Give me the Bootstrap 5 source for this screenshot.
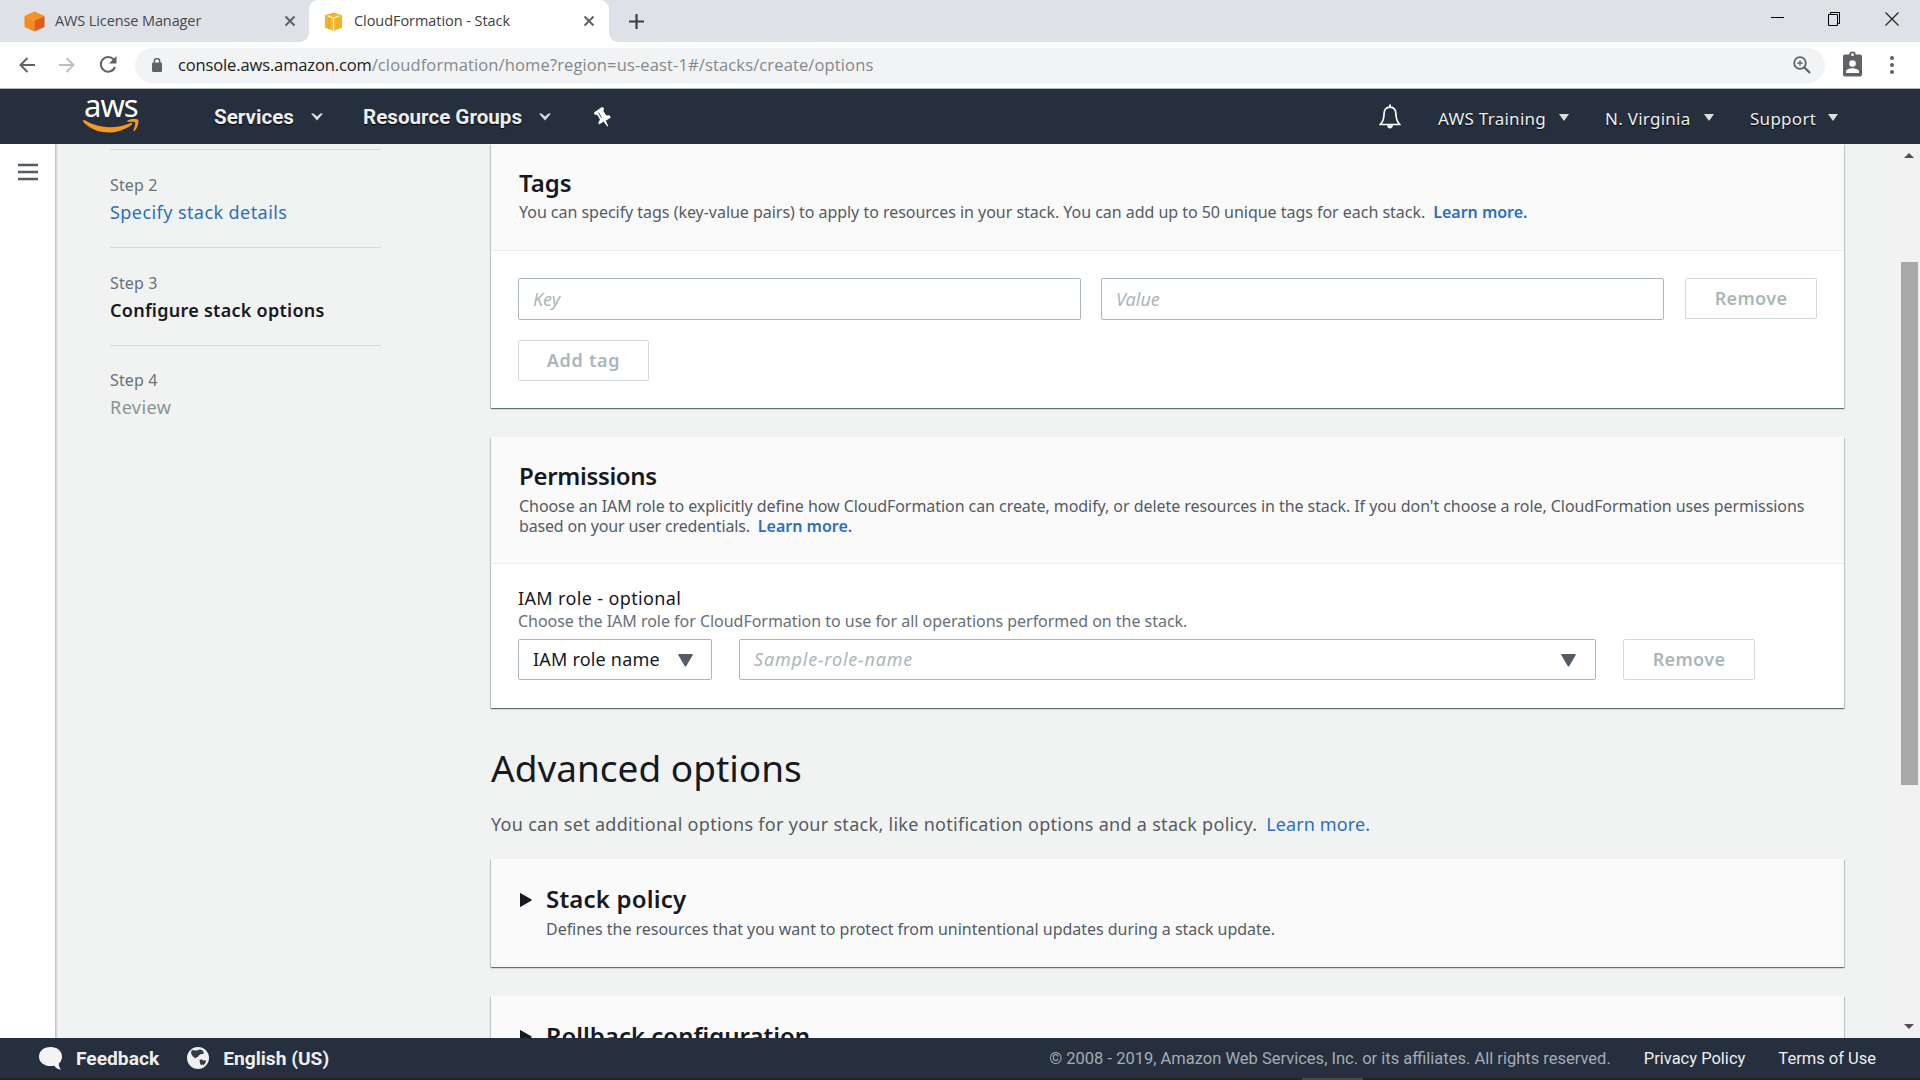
<!DOCTYPE html>
<html lang="en">
<head>
<meta charset="utf-8">
<meta name="viewport" content="width=device-width, initial-scale=1">
<title>CloudFormation - Stack</title>
<link href="https://cdn.jsdelivr.net/npm/bootstrap@5.3.0/dist/css/bootstrap.min.css" rel="stylesheet">
<style>
body{font-family:"Noto Sans","Open Sans",sans-serif;height:1080px;overflow:hidden;background:#f1f3f3;color:#16191f}
svg{display:block;flex:none}
a{text-decoration:none;color:#2b6fbc}
/* browser chrome */
.tabstrip{height:42px;background:#dee1e5;font:14.5px/20px "Open Sans",sans-serif;letter-spacing:-.11px;color:#45494d}
.tab-idle{width:309px;padding:0 13px 0 24px}
.tab-live{width:300px;height:42px;background:#fff;border-radius:9px 9px 0 0;padding:0 14px 0 15px;color:#3c4043;position:relative;letter-spacing:-.06px}
.tab-name{margin-left:10px}
.tab-live .tab-name{margin-left:11px}
.tab-live::before,.tab-live::after{content:"";position:absolute;bottom:0;width:9px;height:9px}
.tab-live::before{left:-9px;background:radial-gradient(circle at 0 0,transparent 8.5px,#fff 9px)}
.tab-live::after{right:-9px;background:radial-gradient(circle at 100% 0,transparent 8.5px,#fff 9px)}
.tab-plus{margin-left:20px}
.win-ctl{gap:43px;padding-right:21px;padding-bottom:4px}
.toolbar{height:47px;background:#fff;border-bottom:1px solid #b3b5b8;padding:0 19px}
.omnibox{height:35px;border-radius:18px;background:#f1f3f4;margin-left:18px;width:1690px;padding:0 14px 0 17px;font:16.5px/22px "Open Sans",sans-serif;color:#84888c}
.omnibox .host{color:#202124;letter-spacing:-.13px}
.omnibox .path{letter-spacing:.13px}
/* console header */
.topnav{height:55px;background:#262f3e;padding:0 82px 0 83px;color:#eee}
.logo-box{width:56px;height:55px;padding-top:3px}
.logo-word{font:400 31px/27px "Noto Sans",sans-serif;letter-spacing:-1px;color:#fff;margin-left:1px}
.menu-main{font:700 20.6px/26px Roboto,sans-serif;padding-top:1px;text-shadow:0 1px 1px #000}
.menu-side{font:17px/24px "Noto Sans",sans-serif;letter-spacing:.27px;padding-top:5px;text-shadow:0 1px 1px #000}
.menu-side svg{margin-top:-4px}
.w-services{width:109px;margin-left:75px}.w-groups{width:188px;margin-left:40px}
.w-train{width:131px}.w-region{width:109px}.w-support{width:88px}
/* page area */
.stage{height:894px;overflow:hidden}
.rail{width:56px;background:#fff;border-right:1px solid #bfc4c4;box-shadow:1px 0 1px rgba(0,28,36,.12);padding:19px 0 0 18px}
.steps{width:434px;padding:5px 109px 0 54px;color:#687078}
.step-item{border-top:1px solid #d5dbdb;height:98px;padding-top:24px;white-space:nowrap}
.step-item:last-child{padding-top:23px}
.step-no{font-size:16px;line-height:22px;letter-spacing:.15px}
.step-name{font-size:18px;line-height:24px;letter-spacing:.43px;margin-top:4px}
.step-now{font-weight:600;color:#16191f;letter-spacing:.27px}
.main-col{width:1353px;margin-left:1px}
.panel{background:#fff;box-shadow:0 1px 1px 0 rgba(0,28,36,.45),1px 1px 1px 0 rgba(0,28,36,.15),-1px 1px 1px 0 rgba(0,28,36,.15)}
.panel+.panel{margin-top:29px}
.panel-head{background:#fafafa;border-bottom:1px solid #eaeded;padding:24px 27px 0 28px}
.panel-head h2{font-size:24px;line-height:30px;font-weight:600;margin:0 0 4px}
.panel-head h2.tight{letter-spacing:-.33px;margin-bottom:5px}
.hint{font-size:16px;line-height:20px;color:#545b64;letter-spacing:-.03px;margin:0;white-space:nowrap}
.hint a{font-weight:600;margin-left:4px}
.hint-long{letter-spacing:-.06px}
.hint-second{letter-spacing:-.16px}
.hint-second a{letter-spacing:0}
.h-tags{height:107px}.h-perm{height:127px}
.panel-in{padding:27px 27px}
.field{border:1px solid #aab7b8;border-radius:2px;height:42px;font-size:18px;line-height:24px;color:#aab7b8;font-style:italic;padding:0 15px 0 14px;background:#fff}
.field::placeholder{color:#aab7b8;opacity:1}
.field-key{width:563px}
.field-key:first-child{margin-right:20px}
.btn-off{height:41px;border:1px solid #d5dbdb;border-radius:2px;background:#fff;color:#aab7b8;font-weight:600;font-size:18px;line-height:24px;letter-spacing:.35px;padding:0 0 2px}
.btn-remove{width:132px}.btn-add{width:131px;letter-spacing:.7px;margin-top:20px}
.role-type{width:194px;height:41px;color:#16191f;font-style:normal;padding-bottom:1px;letter-spacing:.2px}
.role-name{width:857px;height:41px;padding-bottom:1px;letter-spacing:.8px}
.role-type svg,.role-name svg{margin-top:2px}
.label-main{font-size:18px;line-height:24px;letter-spacing:.36px}
.adv-title{font-size:37px;line-height:46px;font-weight:400;margin:37px 0 21px}
.adv-text{font-size:18px;line-height:24px;letter-spacing:.29px;color:#545b64;margin:0 0 23px;white-space:nowrap}
.fold{height:108px;background:#fafafa;padding:25px 29px 0}
.fold h2{font-size:24px;line-height:30px;font-weight:600;margin:0 0 5px}
.fold svg{margin:9px 14px 0 0}
.scroller{width:20px;background:#f1f1f1;padding:9px 0}
.thumb{width:17px;height:523px;background:#a8a8a8;margin-top:104px;margin-left:1px}
/* footer */
.foot{height:40px;background:#262f3e;color:#eee;padding:0 44px 0 39px;font-family:Roboto,sans-serif;font-size:16.5px;line-height:24px}
.foot span{padding-top:1px}
.foot-strong{font-weight:700;font-size:19.2px}
.taskbar{height:2px;background:#222;padding-left:1302px}
.taskbar div{width:61px;height:2px;background:#4b4b4b}
</style>
<script src="https://cdn.jsdelivr.net/npm/bootstrap@5.3.0/dist/js/bootstrap.bundle.min.js"></script>
</head>
<body>
<div class="tabstrip d-flex justify-content-between">
  <div class="d-flex align-items-center">
    <div class="tab-idle d-flex align-items-center">
      <svg width="21" height="21" viewBox="0 0 21 21"><path fill="#f7931e" d="M10.500 .5 20.500 5 10.500 9.500.500 5z"/><path fill="#f28a1f" d="M.5 5 10.500 9.500V20.500L.5 16z"/><path fill="#e25b17" d="M20.500 5 10.500 9.500V20.500l10-4.500z"/></svg>
      <span class="tab-name me-auto">AWS License Manager</span>
      <svg width="12" height="12" viewBox="0 0 12 12"><path d="M1.500 1.500l9 9m0-9l-9 9" stroke="#5f6368" stroke-width="2"/></svg>
    </div>
    <div class="tab-live d-flex align-items-center">
      <svg width="19" height="19" viewBox="0 0 19 21"><path fill="#f2b42a" d="M0 3.500 9.500.5 19 3.500v14l-9.500 3.200-9.500-3.200z"/><path fill="#f5b324" d="M1 3.500 9.500 6 18 3.500 9.500 1z"/><path d="M3 4.200l6.500 2.500L16 4.200M9.500 6.500v13.500" fill="none" stroke="#fff3d0" stroke-width="1.500"/><path d="M4.500 6v13M14.500 6v13" stroke="#e5a41f"/></svg>
      <span class="tab-name me-auto">CloudFormation - Stack</span>
      <svg width="12" height="12" viewBox="0 0 12 12"><path d="M1.500 1.500l9 9m0-9l-9 9" stroke="#5f6368" stroke-width="2"/></svg>
    </div>
    <svg class="tab-plus" width="15" height="15" viewBox="0 0 15 15"><path d="M7.500 0v15M0 7.500h15" stroke="#3c4043" stroke-width="2.200"/></svg>
  </div>
  <div class="win-ctl d-flex align-items-center">
    <svg width="14" height="14" viewBox="0 0 14 14"><path d="M0 5.500h13" stroke="#000"/></svg>
    <svg width="14" height="14" viewBox="0 0 14 14"><path d="M.5 2.500h9v11h-9zM2.500 2.500v-2h9v11h-2" fill="none" stroke="#000"/></svg>
    <svg width="14" height="14" viewBox="0 0 14 14"><path d="M.5.500l13 13m0-13l-13 13" stroke="#222" stroke-width="1.200"/></svg>
  </div>
</div>

<div class="toolbar d-flex align-items-center">
  <svg width="16" height="16" viewBox="0 0 16 16"><path d="M16 8H1.500M8.500 1L1.500 8l7 7" fill="none" stroke="#5f6368" stroke-width="2"/></svg>
  <svg class="ms-4" width="16" height="16" viewBox="0 0 16 16"><path d="M0 8h14.500M7.500 1l7 7-7 7" fill="none" stroke="#bcbec1" stroke-width="2"/></svg>
  <svg class="ms-4" width="18" height="18" viewBox="0 0 18 18"><path d="M14.800 3.700A7.300 7.300 0 1 0 16 11" fill="none" stroke="#5f6368" stroke-width="2.100"/><path d="M17.500 0v7.500H10z" fill="#5f6368"/></svg>
  <div class="omnibox d-flex align-items-center">
    <svg width="10" height="14" viewBox="0 0 10 14"><rect y="4.500" width="10" height="9.500" rx="1.200" fill="#5f6368"/><path d="M2.300 5V3.300a2.700 2.700 0 0 1 5.400 0V5" fill="none" stroke="#5f6368" stroke-width="1.500"/></svg>
    <span class="ms-3 me-auto"><span class="host">console.aws.amazon.com</span><span class="path">/cloudformation/home?region=us-east-1#/stacks/create/options</span></span>
    <svg width="18" height="18" viewBox="0 0 18 18" fill="none" stroke="#5f6368"><circle cx="7" cy="7" r="5.800" stroke-width="1.800"/><path d="M11.200 11.200l5.800 5.800" stroke-width="2.300"/><path d="M7 4.300v5.400M4.300 7h5.400" stroke-width="1.300"/></svg>
  </div>
  <svg style="margin-left:18px;margin-top:-3px" width="19" height="26" viewBox="0 0 19 26"><rect y="3.500" width="19" height="22" rx="2" fill="#5f6368"/><circle cx="9.500" cy="3.700" r="3.200" fill="#5f6368"/><circle cx="9.500" cy="3.700" r="1.400" fill="#fff"/><circle cx="9.500" cy="12.500" r="3.300" fill="#fff"/><path d="M3 22v-1.500c0-2.200 4.300-3.300 6.500-3.300s6.500 1.100 6.500 3.300V22z" fill="#fff"/></svg>
  <svg style="margin-left:28px" width="4" height="18" viewBox="0 0 4 18" fill="#5f6368"><circle cx="2" cy="2" r="2"/><circle cx="2" cy="9" r="2"/><circle cx="2" cy="16" r="2"/></svg>
</div>

<nav class="topnav d-flex align-items-center">
  <div class="logo-box">
    <div class="logo-word">aws</div>
    <svg width="56" height="15" viewBox="0 0 56 15"><path d="M.3 1.600C.8.900 1.300 1 2.200 1.500c8 4.600 16 6.700 24.500 6.700 7 0 14.500-1.500 21-4.300 1.300-.5 2.200.8 1 1.800C42.500 10.500 34 13.500 26 13.500 15.500 13.500 6.500 9.500.6 3.200 0 2.500 0 2 .3 1.600z" fill="#f7981f"/><path d="M44.500 1.600C47.500-.4 52.500-.5 55 .6c1.400 1.500-.3 8.400-3.600 11.300-.6.500-1.300.1-1-.6 1-2.500 2.300-6.600 1.700-7.900-.8-1-4.500-.6-6.900-.5-.9 0-1.200-.8-.7-1.300z" fill="#f7981f"/></svg>
  </div>
  <div class="menu-main d-flex align-items-center">
    <div class="w-services d-flex align-items-center justify-content-between">Services
      <svg width="12" height="8" viewBox="0 0 12 8"><path d="M0 .5h2.500L6 3.500 9.500.5H12L6 7.500z" fill="#ddd"/></svg></div>
    <div class="w-groups d-flex align-items-center justify-content-between">Resource Groups
      <svg width="12" height="8" viewBox="0 0 12 8"><path d="M0 .5h2.500L6 3.500 9.500.5H12L6 7.500z" fill="#ddd"/></svg></div>
    <svg style="margin-left:43px" width="17" height="20" viewBox="0 0 17 20"><path d="M8 0l2 1-.6 3.200 3 4.300 3.200-.2 1.200 2.200-5 3.200L14.300 19l-1 .4-3.700-5-4.400 3-1-1.900 1.800-2.700-2.600-4.800L.5 7.500 0 5.500z" fill="#fff"/><path d="M4.600 5.600l3 5.200" stroke="#262f3e" stroke-width=".9"/></svg>
  </div>
  <svg class="ms-auto" style="margin-right:37px" width="22" height="25" viewBox="0 0 22 25"><path d="M11 3.200c-4.300 0-6 3.300-6 7 0 5.500-1.500 8-3.700 10.300h19.400C18.500 18.200 17 15.700 17 10.200c0-3.700-1.700-7-6-7z" fill="none" stroke="#fff" stroke-width="1.700"/><path d="M10 .5h2v3h-2zM8 21.300h6c-.3 4.200-5.700 4.200-6 0z" fill="#fff"/></svg>
  <div class="menu-side d-flex align-items-center">
    <div class="w-train d-flex align-items-center justify-content-between">AWS Training
      <svg width="10" height="7" viewBox="0 0 10 7"><path d="M0 0h10L5 7z" fill="#ddd"/></svg></div>
    <div class="w-region d-flex align-items-center justify-content-between" style="margin:0 36px 0 36px">N. Virginia
      <svg width="10" height="7" viewBox="0 0 10 7"><path d="M0 0h10L5 7z" fill="#ddd"/></svg></div>
    <div class="w-support d-flex align-items-center justify-content-between">Support
      <svg width="10" height="7" viewBox="0 0 10 7"><path d="M0 0h10L5 7z" fill="#ddd"/></svg></div>
  </div>
</nav>

<div class="stage d-flex">
  <aside class="rail flex-shrink-0">
    <svg width="20" height="18" viewBox="0 0 20 18"><path d="M0 2h20M0 9h20M0 16h20" stroke="#545b64" stroke-width="2.600"/></svg>
  </aside>
  <div class="steps flex-shrink-0">
    <div class="step-item"><div class="step-no">Step 2</div><div class="step-name"><a href="#">Specify stack details</a></div></div>
    <div class="step-item"><div class="step-no">Step 3</div><div class="step-name step-now">Configure stack options</div></div>
    <div class="step-item"><div class="step-no">Step 4</div><div class="step-name" style="color:#879596">Review</div></div>
  </div>
  <main class="main-col flex-shrink-0">
    <section class="panel">
      <div class="panel-head h-tags">
        <h2>Tags</h2>
        <p class="hint">You can specify tags (key-value pairs) to apply to resources in your stack. You can add up to 50 unique tags for each stack. <a href="#">Learn more.</a></p>
      </div>
      <div class="panel-in">
        <div class="d-flex">
          <input class="field field-key" placeholder="Key">
          <input class="field field-key" placeholder="Value">
          <button class="btn-off btn-remove ms-auto" type="button">Remove</button>
        </div>
        <button class="btn-off btn-add d-block" type="button">Add tag</button>
      </div>
    </section>
    <section class="panel">
      <div class="panel-head h-perm">
        <h2 class="tight">Permissions</h2>
        <p class="hint hint-long">Choose an IAM role to explicitly define how CloudFormation can create, modify, or delete resources in the stack. If you don't choose a role, CloudFormation uses permissions<br><span class="hint-second">based on your user credentials. <a href="#">Learn more.</a></span></p>
      </div>
      <div class="panel-in" style="padding-top:22px;padding-bottom:28px">
        <div class="label-main">IAM role - optional</div>
        <p class="hint mb-2" style="margin-top:1px;color:#687078">Choose the IAM role for CloudFormation to use for all operations performed on the stack.</p>
        <div class="d-flex">
          <div class="field role-type d-flex align-items-center justify-content-between" style="padding-right:18px">IAM role name
            <svg width="15" height="13" viewBox="0 0 15 13"><path d="M1 0h13q1.300 0 .6 1.200L8.300 12q-.8 1.200-1.600 0L.4 1.200Q-.3 0 1 0z" fill="#545b64"/></svg></div>
          <div class="field role-name d-flex align-items-center justify-content-between" style="margin:0 27px;padding-right:19px">Sample-role-name
            <svg width="15" height="13" viewBox="0 0 15 13"><path d="M1 0h13q1.300 0 .6 1.200L8.300 12q-.8 1.200-1.600 0L.4 1.200Q-.3 0 1 0z" fill="#545b64"/></svg></div>
          <button class="btn-off btn-remove" type="button">Remove</button>
        </div>
      </div>
    </section>
    <h1 class="adv-title">Advanced options</h1>
    <p class="adv-text">You can set additional options for your stack, like notification options and a stack policy. <a class="ms-1" href="#" style="letter-spacing:.1px">Learn more.</a></p>
    <section class="panel fold d-flex align-items-start">
      <svg width="12" height="14" viewBox="0 0 12 14"><path d="M0 1Q0-.4 1.200.4l10 5.800q1 .8 0 1.600l-10 5.800Q0 14.400 0 13z" fill="#16191f"/></svg>
      <div><h2 style="letter-spacing:.2px">Stack policy</h2><p class="hint">Defines the resources that you want to protect from unintentional updates during a stack update.</p></div>
    </section>
    <section class="panel fold d-flex align-items-start">
      <svg width="12" height="14" viewBox="0 0 12 14"><path d="M0 1Q0-.4 1.200.4l10 5.800q1 .8 0 1.600l-10 5.800Q0 14.400 0 13z" fill="#16191f"/></svg>
      <div><h2>Rollback configuration</h2></div>
    </section>
  </main>
  <div class="scroller ms-auto d-flex flex-column flex-shrink-0">
    <svg class="ms-1" width="10" height="5" viewBox="0 0 10 5"><path d="M0 5l5-5 5 5z" fill="#505050"/></svg>
    <div class="thumb"></div>
    <svg class="ms-1 mt-auto" width="10" height="5" viewBox="0 0 10 5"><path d="M0 0l5 5 5-5z" fill="#505050"/></svg>
  </div>
</div>

<footer class="foot d-flex align-items-center">
  <svg width="23" height="23" viewBox="0 0 23 23"><path d="M11.500 0C18.500 0 23 4 23 9.800c0 3-1.500 5.400-3.200 6.900.2 2.800 1 4.300 2.200 6-2.800-.3-5.200-2-6.800-4-7.900 1.700-15.200-2.200-15.200-8.900C0 4 4.500 0 11.500 0z" fill="#f4f4f4"/></svg>
  <span class="foot-strong" style="margin-left:14px">Feedback</span>
  <svg style="margin-left:28px" width="22" height="22" viewBox="0 0 22 22"><circle cx="11" cy="11" r="11" fill="#f0f0f0"/><path d="M4.500 3.500C7 2.500 9 4 10.500 3.200c1.500-.8 2.500-1 4-.2 1.300.7 2.700 1.800 2 3.500-.8 1.300-2-.2-3 .7-.6.800-2 1-2.200 2.300-.8 1-2.300.5-2.300 1.800-1-.5-2.500-.8-3.500-2.300-1-1.500-2-3-1-5.500zM12.500 13c1-1 3-.5 4 .5 1 1.500-.5 3-1.500 4.500-1.200.5-2-1-2-2.200zM16 14l2.800-1c.4 2-.8 4.500-3 5.500z" fill="#333b47"/></svg>
  <span class="foot-strong" style="margin-left:14px">English (US)</span>
  <span class="ms-auto" style="color:#a5acb5">© 2008 - 2019, Amazon Web Services, Inc. or its affiliates. All rights reserved.</span>
  <span style="margin:0 33px 0 33px">Privacy Policy</span>
  <span>Terms of Use</span>
</footer>
<div class="taskbar"><div></div></div>
</body>
</html>
